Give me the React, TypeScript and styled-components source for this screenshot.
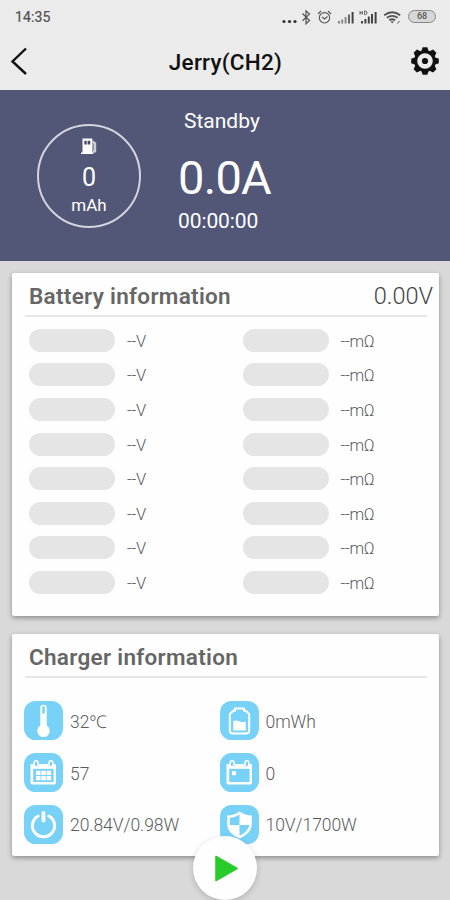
import React from "react";
import styled, { createGlobalStyle } from "styled-components";

const GlobalStyle = createGlobalStyle`
  * { box-sizing: border-box; }
  body { margin: 0; background: #d9d9d9; font-family: Roboto, "Noto Sans", sans-serif; }
  svg { display: block; flex: none; }
`;

const Screen = styled.div`
  position: relative;
  width: 450px;
  height: 900px;
  overflow: hidden;
  display: flex;
  flex-direction: column;
  background: #d9d9d9;
`;

const StatusBar = styled.div`
  height: 33px;
  flex: none;
  display: flex;
  align-items: center;
  justify-content: space-between;
  padding: 0 14px 0 15px;
  background: #ebebeb;
`;

const Clock = styled.span`
  font-size: 14px;
  line-height: 16px;
  color: #505050;
  letter-spacing: 0.1px;
  -webkit-text-stroke: 0.2px #505050;
`;

const BatteryPill = styled.span`
  width: 28px;
  height: 13px;
  border: 1px solid #858585;
  border-radius: 7px;
  background: #d7d7d7;
  color: #555;
  font-size: 9px;
  font-weight: 500;
  line-height: 11px;
  text-align: center;
`;

const StatusIcons = styled.div`
  display: flex;
  align-items: center;
`;

const Header = styled.header`
  height: 57px;
  flex: none;
  display: grid;
  grid-template-columns: 60px 1fr 60px;
  align-items: center;
  background: #ebebeb;
`;

const Title = styled.h1`
  margin: 0;
  padding: 1px 0 0 1px;
  font-size: 22.5px;
  letter-spacing: 0.25px;
  line-height: 26px;
  font-weight: 500;
  color: #111;
  text-align: center;
`;

const IconButton = styled.button<{ $side: "left" | "right" }>`
  border: 0;
  padding: ${(p) => (p.$side === "left" ? "0 0 1px 10px" : "0 11px 2px 0")};
  background: none;
  display: flex;
  justify-content: ${(p) => (p.$side === "left" ? "flex-start" : "flex-end")};
`;

const Summary = styled.section`
  height: 171px;
  flex: none;
  display: flex;
  align-items: flex-start;
  padding-left: 37px;
  background: #535777;
  color: #fff;
`;

const Dial = styled.div`
  width: 104px;
  height: 104px;
  margin-top: 34px;
  border: 2px solid #d3d4df;
  border-radius: 50%;
  display: flex;
  flex-direction: column;
  align-items: center;
  padding-top: 12px;
`;

const DialValue = styled.span`
  margin-top: 7px;
  font-size: 25px;
  line-height: 32px;
`;

const DialUnit = styled.span`
  font-size: 17px;
  line-height: 20px;
  margin-top: 1px;
`;

const Readings = styled.div`
  margin-left: 37px;
  padding-top: 18px;
  display: flex;
  flex-direction: column;
`;

const State = styled.span`
  padding-left: 6px;
  font-size: 21px;
  line-height: 26px;
`;

const Current = styled.span`
  margin-top: 16px;
  font-size: 47px;
  line-height: 56px;
  letter-spacing: -0.7px;
`;

const Elapsed = styled.span`
  margin-top: 2px;
  font-size: 21px;
  line-height: 26px;
  letter-spacing: -0.1px;
`;

const Card = styled.section<{ $top: number; $height: number }>`
  flex: none;
  width: 427px;
  height: ${(p) => p.$height}px;
  margin: ${(p) => p.$top}px 0 0 12px;
  background: #fefefe;
  border-radius: 2px;
  box-shadow: 0 2px 5px rgba(0, 0, 0, 0.36);
`;

const CardHeader = styled.div`
  height: 44px;
  margin: 0 12px 0 13px;
  border-bottom: 2px solid #e7e7e7;
  display: flex;
  justify-content: space-between;
  align-items: center;
  padding: 4px 0 0 4px;
`;

const CardTitle = styled.h2`
  margin: 0;
  font-size: 22.5px;
  letter-spacing: 0.3px;
  line-height: 28px;
  font-weight: 600;
  color: #666;
  white-space: nowrap;
`;

const PackVoltage = styled.span`
  margin-right: -6px;
  font-size: 23.5px;
  line-height: 28px;
  font-weight: 300;
  color: #444;
`;

const CellGrid = styled.div`
  display: grid;
  grid-template-columns: 213.5px 1fr;
  grid-auto-rows: 34.6px;
  padding: 6px 0 0 17px;
`;

const Cell = styled.div`
  display: flex;
  align-items: center;
  gap: 12px;
`;

const CellBar = styled.span`
  width: 86px;
  height: 23px;
  border-radius: 12px;
  background: #e5e5e5;
`;

const CellText = styled.span`
  padding-top: 3px;
  font-size: 16.5px;
  line-height: 20px;
  font-weight: 300;
  letter-spacing: -0.25px;
  color: #5c5c5c;
`;

const InfoGrid = styled.div`
  display: grid;
  grid-template-columns: 195.5px 1fr;
  grid-auto-rows: 51.8px;
  padding: 17px 0 0 12px;
`;

const InfoItem = styled.div`
  display: flex;
  align-items: center;
  gap: 7px;
`;

const Tile = styled.span`
  width: 39px;
  height: 39px;
  border-radius: 11.5px;
  background: #78d2f8;
  display: flex;
  align-items: center;
  justify-content: center;
`;

const InfoText = styled.span`
  padding-top: 2px;
  font-size: 17.5px;
  line-height: 20px;
  font-weight: 300;
  letter-spacing: -0.05px;
  color: #5c5c5c;
`;

const StartButton = styled.button`
  position: absolute;
  left: 193px;
  top: 836px;
  width: 64px;
  height: 64px;
  border: 0;
  padding: 0 0 0 2px;
  border-radius: 50%;
  background: #fefefe;
  box-shadow: 0 2px 6px rgba(0, 0, 0, 0.18);
  display: flex;
  align-items: center;
  justify-content: center;
`;

const StatusGlyphs = () => (
  <svg width="127" height="18" viewBox="281 7 127 18" fill="none" stroke="#555">
    <g fill="#333" stroke="none">
      <circle cx="284" cy="20.5" r="1.6" />
      <circle cx="289.5" cy="20.5" r="1.6" />
      <circle cx="295" cy="20.5" r="1.6" />
    </g>
    <path d="M302.5 12.5l7 7-3.5 3.3V9.8l3.5 3.3-7 6.6" strokeWidth="1.2" />
    <g strokeWidth="1.1">
      <circle cx="324.5" cy="16.8" r="5.2" />
      <path d="M318 13l3-3M331 13l-3-3M322 16l2.5 2 3-2.5" />
    </g>
    <g strokeWidth="2">
      <path d="M339 20v2.5M342.2 18.5v4" stroke="#888" />
      <path d="M345.6 16v6.5" stroke="#888" />
      <path d="M349 13.5v9" stroke="#666" />
      <path d="M352.6 11v11.5" stroke="#444" />
    </g>
    <g strokeWidth="2" stroke="#444">
      <path d="M362 20v2.5M365.4 18v4.5M368.8 15.5v7M372 13v9.5M375.6 11v11.5" />
      <path d="M360 10v3.5M362.3 10v3.5M360 11.8h2.3M364.5 10v3.5h1.3l1.2-1v-1.5l-1.2-1z" strokeWidth="0.8" />
    </g>
    <g strokeWidth="1.9">
      <path d="M384.2 14.2q8-5.8 16 0M386.8 16.8q5.4-3.8 10.8 0M389.3 19.2q2.9-2 5.8 0" />
      <path d="M390.5 20.2l1.7 2.3 1.7-2.3z" fill="#555" stroke="none" />
      <path d="M397.5 22.5l2-2.5" strokeWidth="1" />
    </g>
  </svg>
);

const BackIcon = () => (
  <svg width="18" height="28" viewBox="0 0 18 28" fill="none" stroke="#111" strokeWidth="2.4">
    <path d="M16 1.5L2.5 14.5L16 27" />
  </svg>
);

const teeth = [0, 45, 90, 135, 180, 225, 270, 315];

const GearIcon = () => (
  <svg width="28" height="28" viewBox="-14 -14 28 28" fill="#111">
    {teeth.map((a) => (
      <path key={a} d="M-4 -9L-2.3 -13.8H2.3L4 -9z" transform={`rotate(${a})`} />
    ))}
    <circle r="9.3" fill="#ebebeb" stroke="#111" strokeWidth="3" />
    <circle r="3.1" />
  </svg>
);

const FuelIcon = () => (
  <svg width="18" height="17" viewBox="0 0 18 17">
    <path d="M2.5 .5h9.8v14h1v1.5H1v-1.5h1.5z" fill="#fff" />
    <path d="M4.3 2.8h2.4v3.6H4.3zM7.6 2.8h2.7v3.6H7.6z" fill="#454966" />
    <path d="M12.4 2.2l3.8 2.5v9l-1 1h-2.6" fill="#d0cfd0" />
    <path d="M13.4 5.5v7" stroke="#777a91" strokeWidth=".8" />
  </svg>
);

const ThermometerIcon = () => (
  <svg width="39" height="39" viewBox="0 0 39 39">
    <path d="M16.3 7a3.2 3.2 0 0 1 6.4 0V24.6a6.2 6.2 0 1 1-6.4 0z" fill="#fff" />
    <path d="M19.5 6.5v5" stroke="#78d2f8" strokeWidth="2.6" strokeLinecap="round" />
  </svg>
);

const CalendarFrame = () => (
  <>
    <path d="M6.5 11h5.5v2.5h3V11h9v2.5h3V11h5v18.5q0 2-2 2H8.5q-2 0-2-2z" fill="#fff" />
    <g stroke="#fff" strokeWidth="1.5" fill="#78d2f8">
      <rect x="10.2" y="7.7" width="3.8" height="6.3" rx="1.9" />
      <rect x="25" y="7.7" width="3.8" height="6.3" rx="1.9" />
    </g>
    <path d="M9.2 15.8h20.4v13.2H9.2z" fill="#78d2f8" />
  </>
);

const CalendarGridIcon = () => (
  <svg width="39" height="39" viewBox="0 0 39 39">
    <CalendarFrame />
    <path
      d="M12 17.8h4.5v4.2H12zM17.3 17.8h4.5v4.2h-4.5zM22.6 17.8h4.5v4.2h-4.5zM12 23h4.5v4.2H12zM17.3 23h4.5v4.2h-4.5zM22.6 23h4.5v4.2h-4.5z"
      fill="#fff"
    />
  </svg>
);

const CalendarDayIcon = () => (
  <svg width="39" height="39" viewBox="0 0 39 39">
    <CalendarFrame />
    <path d="M12 18.2h4v4h-4z" fill="#fff" />
  </svg>
);

const PowerIcon = () => (
  <svg width="39" height="39" viewBox="0 0 39 39" fill="none" stroke="#fff">
    <path d="M14.2 11a11.1 11.1 0 1 0 10.6 0" strokeWidth="3" strokeLinecap="round" />
    <path d="M19.5 8v7.5" strokeWidth="3.8" strokeLinecap="round" />
  </svg>
);

const BatteryIcon = () => (
  <svg width="39" height="39" viewBox="0 0 39 39">
    <path
      d="M15 7.5h9v2.3h1.8l3.4 3.4V29.5q0 3-3 3H12.8q-3 0-3-3V13.2l3.4-3.4H15z"
      fill="none"
      stroke="#fff"
      strokeWidth="2"
      strokeLinejoin="round"
    />
    <path d="M13.3 20q3-1 6.2 .4t6.2 .4V29.5H13.3z" fill="#fff" />
  </svg>
);

const ShieldIcon = () => (
  <svg width="39" height="39" viewBox="0 0 39 39">
    <path d="M19.5 6.5q5.5 3.8 12.3 4v9c0 6-5.3 11-12.3 14-7-3-12.3-8-12.3-14v-9q6.8-.2 12.3-4z" fill="#fff" />
    <path d="M19.5 9.5v10.5H9.8V12.8q5.5-.3 9.7-3.3zM19.5 20H29.2q-.8 6.5-9.7 10.8z" fill="#78d2f8" />
  </svg>
);

const cells = [1, 2, 3, 4, 5, 6, 7, 8];

const info: { icon: React.ReactNode; text: string }[] = [
  { icon: <ThermometerIcon />, text: "32℃" },
  { icon: <BatteryIcon />, text: "0mWh" },
  { icon: <CalendarGridIcon />, text: "57" },
  { icon: <CalendarDayIcon />, text: "0" },
  { icon: <PowerIcon />, text: "20.84V/0.98W" },
  { icon: <ShieldIcon />, text: "10V/1700W" },
];

export default function App() {
  return (
    <Screen>
      <GlobalStyle />
      <StatusBar>
        <Clock>14:35</Clock>
        <StatusIcons>
          <StatusGlyphs />
          <BatteryPill>68</BatteryPill>
        </StatusIcons>
      </StatusBar>
      <Header>
        <IconButton $side="left" aria-label="Back">
          <BackIcon />
        </IconButton>
        <Title>Jerry(CH2)</Title>
        <IconButton $side="right" aria-label="Settings">
          <GearIcon />
        </IconButton>
      </Header>
      <Summary>
        <Dial>
          <FuelIcon />
          <DialValue>0</DialValue>
          <DialUnit>mAh</DialUnit>
        </Dial>
        <Readings>
          <State>Standby</State>
          <Current>0.0A</Current>
          <Elapsed>00:00:00</Elapsed>
        </Readings>
      </Summary>
      <Card $top={12} $height={343}>
        <CardHeader>
          <CardTitle>Battery information</CardTitle>
          <PackVoltage>0.00V</PackVoltage>
        </CardHeader>
        <CellGrid>
          {cells.map((n) => (
            <React.Fragment key={n}>
              <Cell>
                <CellBar />
                <CellText>--V</CellText>
              </Cell>
              <Cell>
                <CellBar />
                <CellText>--mΩ</CellText>
              </Cell>
            </React.Fragment>
          ))}
        </CellGrid>
      </Card>
      <Card $top={18} $height={222}>
        <CardHeader>
          <CardTitle>Charger information</CardTitle>
        </CardHeader>
        <InfoGrid>
          {info.map((item) => (
            <InfoItem key={item.text}>
              <Tile>{item.icon}</Tile>
              <InfoText>{item.text}</InfoText>
            </InfoItem>
          ))}
        </InfoGrid>
      </Card>
      <StartButton aria-label="Start">
        <svg width="26" height="28" viewBox="0 0 26 28">
          <path d="M3 2.5L24 14.5L3 26.5z" fill="#28cc2b" stroke="#28cc2b" strokeWidth="1.6" strokeLinejoin="round" />
        </svg>
      </StartButton>
    </Screen>
  );
}
